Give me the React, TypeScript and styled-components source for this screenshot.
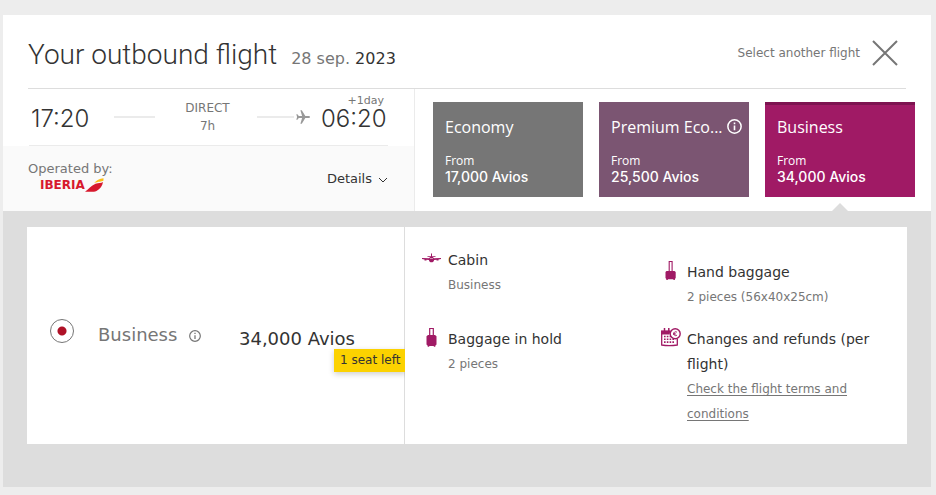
import React from 'react';
import styled, { createGlobalStyle } from 'styled-components';

const GlobalStyle = createGlobalStyle`
  *, *::before, *::after { box-sizing: border-box; }
  body {
    margin: 0;
    background: #ededed;
    color: #333;
    font-family: "DejaVu Sans", Verdana, sans-serif;
    font-size: 12px;
  }
  h1, h2, h3, p, ul { margin: 0; padding: 0; font-weight: 400; }
  button { font: inherit; border: 0; padding: 0; background: none; cursor: pointer; }
`;

const Page = styled.main`
  padding: 15px 5px 8px 3px;
`;

const Panel = styled.section`
  background: #fff;
`;

const Header = styled.header`
  display: flex;
  align-items: center;
  justify-content: space-between;
  margin: 0 25px;
  padding-right: 8px;
  height: 74px;
  border-bottom: 1px solid #ddd;
`;

const Heading = styled.div`
  display: flex;
  align-items: baseline;
  gap: 14px;
  padding-top: 6px;
`;

const Title = styled.h1`
  font-family: Roboto, sans-serif;
  font-size: 28px;
  font-weight: 300;
  line-height: 40px;
`;

const TravelDate = styled.p`
  font-size: 16px;
  color: #333;
  span { color: #767676; }
`;

const ChangeFlight = styled.button`
  display: flex;
  align-items: center;
  gap: 12px;
  padding-top: 2px;
  color: #767676;
  svg { width: 26px; height: 26px; }
`;

const Columns = styled.div`
  display: grid;
  grid-template-columns: 412fr 516fr;
`;

const Journey = styled.div`
  border-right: 1px solid #ebebeb;
`;

const Route = styled.div`
  display: grid;
  grid-template-columns: 68px 56px 1fr 64px 67px;
  align-items: center;
  margin: 0 26px;
  padding-left: 2px;
  height: 57px;
  border-bottom: 1px solid #ebebeb;
`;

const Time = styled.div`
  position: relative;
  padding-top: 3px;
  font-family: Inter, sans-serif;
  font-size: 24px;
  font-weight: 300;
  line-height: 24px;
`;

const DayShift = styled.span`
  position: absolute;
  right: 4px;
  bottom: 24px;
  font-family: "DejaVu Sans", Verdana, sans-serif;
  font-size: 11px;
  font-weight: 400;
  line-height: 12px;
  color: #767676;
`;

const Track = styled.div`
  display: flex;
  align-items: center;
  gap: 2px;
  padding: 0 11px 0 0;
  &::before {
    content: '';
    flex: 1;
    height: 2px;
    background: #ebebeb;
  }
  svg { width: 14px; height: 14px; fill: #999; }
`;

const OutTrack = styled(Track)`
  padding: 0 0 0 15px;
`;

const Duration = styled.p`
  padding-left: 3px;
  text-align: center;
  line-height: 18px;
  color: #767676;
`;

const Operator = styled.div`
  display: flex;
  align-items: center;
  justify-content: space-between;
  height: 65px;
  padding: 0 26px 0 25px;
  background: #fafafa;
`;

const OperatorName = styled.div`
  font-size: 13px;
  line-height: 17px;
  color: #767676;
  padding-bottom: 4px;
`;

const Logo = styled.div`
  display: flex;
  align-items: center;
  padding-left: 12px;
  font-size: 12px;
  font-weight: 700;
  line-height: 16px;
  color: #d7192d;
  svg { width: 19px; height: 16px; }
`;

const DetailsButton = styled.button`
  display: flex;
  align-items: center;
  gap: 6px;
  font-size: 13px;
  color: #333;
  svg { width: 10px; height: 10px; margin-top: 2px; }
`;

const CabinTabs = styled.div`
  display: grid;
  grid-template-columns: repeat(3, 1fr);
  gap: 16px;
  padding: 13px 16px 14px 18px;
`;

const CabinTab = styled.button<{ $color: string; $selected?: boolean }>`
  position: relative;
  height: 95px;
  min-width: 0;
  padding: 12px 8px 12px 12px;
  text-align: left;
  color: #fff;
  background: ${p => p.$color};
  border-top: 3px solid ${p => (p.$selected ? '#7d1350' : p.$color)};
  ${p => p.$selected && `
    &::after {
      content: '';
      position: absolute;
      left: 50%;
      bottom: -14px;
      margin-left: -8px;
      border: 8px solid transparent;
      border-top: 0;
      border-bottom-color: #ddd;
    }
  `}
`;

const CabinName = styled.div`
  display: flex;
  align-items: center;
  gap: 4px;
  font-family: "Open Sans", sans-serif;
  font-size: 16px;
  font-weight: 500;
  line-height: 18px;
  margin-bottom: 17px;
  white-space: nowrap;
  svg { width: 15px; height: 15px; flex: none; }
`;

const From = styled.div`
  font-family: "Open Sans", sans-serif;
  font-size: 12px;
  line-height: 16px;
`;

const CabinPrice = styled.div`
  font-family: Inter, sans-serif;
  font-size: 14px;
  font-weight: 500;
  line-height: 16px;
`;

const Fares = styled.div`
  padding: 16px 24px 43px;
  background: #ddd;
`;

const FareCard = styled.article`
  display: grid;
  grid-template-columns: 378fr 502fr;
  background: #fff;
`;

const Offer = styled.div`
  position: relative;
  display: flex;
  align-items: center;
  overflow: hidden;
  padding: 0 50px 10px 23px;
  box-shadow: inset -1px 0 #ddd;
`;

const Radio = styled.input`
  appearance: none;
  width: 24px;
  height: 24px;
  margin: 0 24px 0 0;
  border: 1px solid #767676;
  border-radius: 50%;
  &:checked { background: radial-gradient(circle, #af1127 4px, transparent 5px); }
`;

const FareLabel = styled.label`
  font-size: 18px;
  line-height: 24px;
  padding-top: 8px;
  color: #767676;
`;

const InfoButton = styled.button`
  display: flex;
  margin: 10px auto 0 12px;
  color: #767676;
  svg { width: 12px; height: 12px; }
`;

const Price = styled.p`
  position: relative;
  padding-top: 16px;
  font-size: 18px;
  line-height: 24px;
  white-space: nowrap;
`;

const SeatBadge = styled.span`
  position: absolute;
  left: 95px;
  top: 38px;
  padding: 0 6px;
  background: #fcd200;
  box-shadow: 0 2px 6px rgba(0, 0, 0, 0.2);
  font-size: 12px;
  line-height: 23px;
`;

const Features = styled.ul`
  display: grid;
  grid-template-columns: 1fr 1fr;
  row-gap: 17px;
  padding: 21px 8px 17px 16px;
  list-style: none;
`;

const Feature = styled.li<{ $lowered?: boolean }>`
  display: flex;
  gap: 6px;
  padding-top: ${p => (p.$lowered ? 12 : 0)}px;
  line-height: 25px;
  > svg { width: 21px; height: 22px; flex: none; color: #a01a65; }
`;

const FeatureName = styled.h3`
  font-size: 14px;
`;

const FeatureText = styled.p`
  color: #767676;
  a { color: inherit; text-underline-offset: 2px; }
`;

const InfoIcon = () => (
  <svg viewBox="0 0 14 14" fill="none" stroke="currentColor" aria-hidden="true">
    <circle cx="7" cy="7" r="6.2" strokeWidth="1.4" />
    <path d="M7 6v4.5M7 3.3v1.5" strokeWidth="1.5" />
  </svg>
);

const CloseIcon = () => (
  <svg viewBox="0 0 26 26" stroke="currentColor" strokeWidth="2" aria-hidden="true">
    <path d="M1 1l24 24M25 1L1 25" />
  </svg>
);

const PlaneIcon = () => (
  <svg viewBox="0 0 14 14" aria-hidden="true">
    <path d="M14 7c0-.7-.7-1-1.600-1H9.300L5.800.3H4.400L6.100 6H2.800L1.400 4.200H.3L1.100 7 .3 9.800h1.100L2.800 8h3.300l-1.700 5.700h1.400L9.300 8h3.100c.9 0 1.600-.3 1.600-1z" />
  </svg>
);

const ChevronIcon = () => (
  <svg viewBox="0 0 10 10" fill="none" stroke="currentColor" strokeWidth="1" aria-hidden="true">
    <path d="M1 3l4 4 4-4" />
  </svg>
);

const TailIcon = () => (
  <svg viewBox="0 0 19 16" aria-hidden="true">
    <path d="M0 14.700C3.500 12.500 6 8.500 10.500 6.700c3-1.100 5.500 0 7.500-1.700-.5 4-3 7.200-6.500 8.900C8 15.400 4 14.500 0 14.700z" fill="#d7192d" />
    <path d="M9 6.200C11.500 3 14.500 1.500 18.500 1.200v2.300c-2 1.500-5 .7-9.500 2.700z" fill="#fcbf14" />
  </svg>
);

const CabinIcon = () => (
  <svg viewBox="0 0 21 22" fill="currentColor" aria-hidden="true">
    <path d="M10 5.500h1V8.200h3.500V9H12l.8 1.200 7.200-.2v1.100l-2.500.4v1h-2v-.8l-2.400.2c-.2 1.500-1.200 2.300-2.600 2.300s-2.400-.8-2.600-2.300l-2.400-.2v.8h-2v-1L1 11.100V10l7.200.2L9 9H6.500v-.8H10z" />
    <path d="M9 10.500h3" stroke="#fff" strokeWidth=".5" />
  </svg>
);

const SuitcaseIcon = () => (
  <svg viewBox="0 0 21 22" fill="currentColor" aria-hidden="true">
    <path d="M8.700 8.500V1.500h3.600v7" fill="none" stroke="currentColor" strokeWidth="1.200" />
    <path d="M7 8h7l1.500 1.200v8.300L14.300 18.700v1h-1.500v-.6H8.200v.6H6.700v-1L5.500 17.500V9.200z" />
  </svg>
);

const HandBagIcon = () => (
  <svg viewBox="0 0 21 22" fill="currentColor" aria-hidden="true">
    <path d="M9.200 12V1.500h2.900V12" fill="none" stroke="currentColor" strokeWidth="1.100" />
    <path d="M6.500 11h8l1.200 1v6l-.8 1v1h-1.500v-.7H7.800v.7H6.300v-1L5.500 18v-6z" />
  </svg>
);

const CalendarIcon = () => (
  <svg viewBox="0 0 21 22" fill="none" stroke="currentColor" aria-hidden="true">
    <path d="M10.500 4.500H1.700v13.500c5 .8 10 .8 15.600 0V12" strokeWidth="1.300" />
    <path d="M1 3.500h9.500l-1 4H1z" fill="currentColor" stroke="none" />
    <path d="M4.500 1v3.500M8.800 1v3.500" strokeWidth="1.500" />
    <path d="M4 9.500h8M4 12.300h11M4 15.100h11" strokeWidth="1.600" strokeDasharray="1.600 1.200" />
    <circle cx="15.200" cy="6.700" r="5" fill="#fff" strokeWidth="1.400" />
    <path d="M17 5.200c-1.900-1.200-3.200 0-3.200 1.500s1.300 2.700 3.200 1.500M13 6.300h2.600M13 7.300h2.600" strokeWidth=".9" />
  </svg>
);

export default function App() {
  return (
    <>
      <GlobalStyle />
      <Page>
        <Panel>
          <Header>
            <Heading>
              <Title>Your outbound flight</Title>
              <TravelDate><span>28 sep.</span> 2023</TravelDate>
            </Heading>
            <ChangeFlight type="button">Select another flight<CloseIcon /></ChangeFlight>
          </Header>

          <Columns>
            <Journey>
              <Route>
                <Time>17:20</Time>
                <OutTrack />
                <Duration>DIRECT<br />7h</Duration>
                <Track><PlaneIcon /></Track>
                <Time>06:20<DayShift>+1day</DayShift></Time>
              </Route>
              <Operator>
                <OperatorName>
                  Operated by:
                  <Logo>IBERIA<TailIcon /></Logo>
                </OperatorName>
                <DetailsButton type="button">Details<ChevronIcon /></DetailsButton>
              </Operator>
            </Journey>

            <CabinTabs>
              <CabinTab type="button" $color="#767676">
                <CabinName>Economy</CabinName>
                <From>From</From>
                <CabinPrice>17,000 Avios</CabinPrice>
              </CabinTab>
              <CabinTab type="button" $color="#7b5572">
                <CabinName>Premium Eco...<InfoIcon /></CabinName>
                <From>From</From>
                <CabinPrice>25,500 Avios</CabinPrice>
              </CabinTab>
              <CabinTab type="button" $color="#a01a65" $selected aria-pressed="true">
                <CabinName>Business</CabinName>
                <From>From</From>
                <CabinPrice>34,000 Avios</CabinPrice>
              </CabinTab>
            </CabinTabs>
          </Columns>

          <Fares>
            <FareCard>
              <Offer>
                <Radio type="radio" id="fare-business" name="fare" defaultChecked />
                <FareLabel htmlFor="fare-business">Business</FareLabel>
                <InfoButton type="button" aria-label="Fare information"><InfoIcon /></InfoButton>
                <Price>34,000 Avios<SeatBadge>1 seat left</SeatBadge></Price>
              </Offer>
              <Features>
                <Feature>
                  <CabinIcon />
                  <div>
                    <FeatureName>Cabin</FeatureName>
                    <FeatureText>Business</FeatureText>
                  </div>
                </Feature>
                <Feature $lowered>
                  <HandBagIcon />
                  <div>
                    <FeatureName>Hand baggage</FeatureName>
                    <FeatureText>2 pieces (56x40x25cm)</FeatureText>
                  </div>
                </Feature>
                <Feature>
                  <SuitcaseIcon />
                  <div>
                    <FeatureName>Baggage in hold</FeatureName>
                    <FeatureText>2 pieces</FeatureText>
                  </div>
                </Feature>
                <Feature>
                  <CalendarIcon />
                  <div>
                    <FeatureName>Changes and refunds (per flight)</FeatureName>
                    <FeatureText><a href="#terms">Check the flight terms and conditions</a></FeatureText>
                  </div>
                </Feature>
              </Features>
            </FareCard>
          </Fares>
        </Panel>
      </Page>
    </>
  );
}
